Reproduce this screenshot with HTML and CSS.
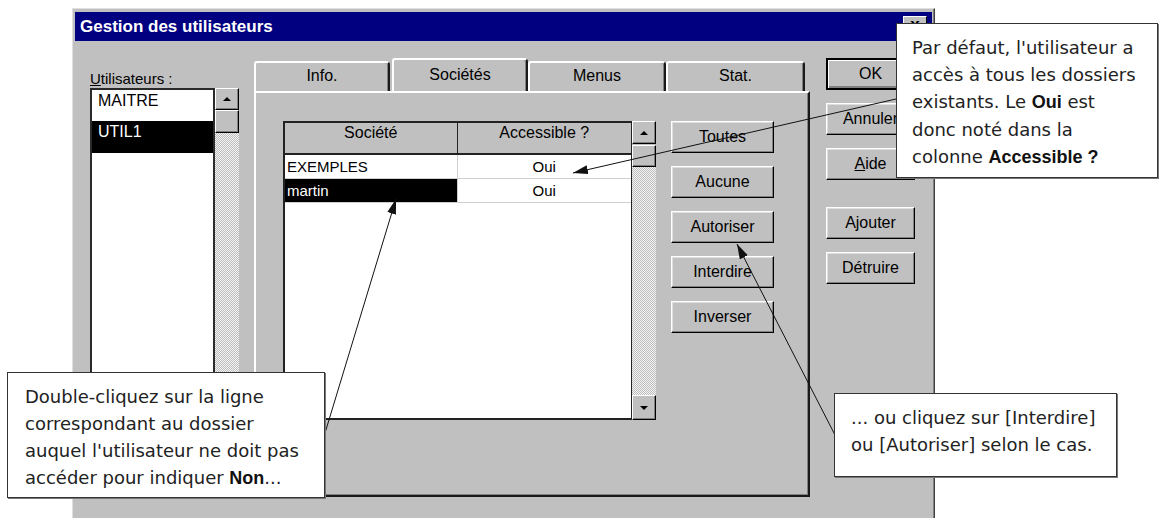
FILE: index.html
```html
<!DOCTYPE html>
<html lang="fr">
<head>
    <meta charset="UTF-8">
    <meta name="viewport" content="width=device-width, initial-scale=1.0">
    <title>Gestion des utilisateurs</title>
    <link rel="stylesheet" href="styles.css">
</head>
<body>
<div class="page">
    <div class="dialog">
        <div class="titlebar">
            <span>Gestion des utilisateurs</span>
            <span class="close">x</span>
        </div>
        <div class="content">
            <!-- users list -->
            <div class="users">
                <div class="label"><u>U</u>tilisateurs :</div>
                <div class="listbox">
                    <div class="items">
                        <div class="item">MAITRE</div>
                        <div class="item selected">UTIL1</div>
                    </div>
                    <div class="vscroll">
                        <div class="sbtn"><span class="arrow-up"></span></div>
                        <div class="thumb"></div>
                        <div class="track"></div>
                    </div>
                </div>
            </div>

            <!-- tabs -->
            <div class="tabs">
                <div class="tabrow">
                    <div class="tab tab-info">Info.</div>
                    <div class="tab tab-soc active">Sociétés</div>
                    <div class="tab tab-menus">Menus</div>
                    <div class="tab tab-stat">Stat.</div>
                </div>
                <div class="panel">
                    <div class="grid">
                        <div class="sheet">
                            <table class="rows">
                                <colgroup><col class="c1"><col class="c2"></colgroup>
                                <tr><th>Société</th><th>Accessible ?</th></tr>
                                <tr><td>EXEMPLES</td><td>Oui</td></tr>
                                <tr><td class="selected">martin</td><td>Oui</td></tr>
                            </table>
                        </div>
                        <div class="vscroll">
                            <div class="sbtn up"><span class="arrow-up"></span></div>
                            <div class="thumb small"></div>
                            <div class="track"></div>
                            <div class="sbtn down"><span class="arrow-down"></span></div>
                        </div>
                    </div>
                    <div class="actions">
                        <div class="btn">Toutes</div>
                        <div class="btn">Aucune</div>
                        <div class="btn">Autoriser</div>
                        <div class="btn">Interdire</div>
                        <div class="btn">Inverser</div>
                    </div>
                </div>
            </div>

            <!-- dialog buttons -->
            <div class="side">
                <div class="btn default">OK</div>
                <div class="btn">Annuler</div>
                <div class="btn"><span><u>A</u>ide</span></div>
                <div class="btn spaced">Ajouter</div>
                <div class="btn">Détruire</div>
            </div>
        </div>
    </div>

    <svg class="arrows" width="1160" height="518" viewBox="0 0 1160 518">
        <defs>
            <marker id="head" markerUnits="userSpaceOnUse" markerWidth="16" markerHeight="10"
                    refX="15" refY="4.5" orient="auto">
                <path d="M0,0 L15,4.5 L0,9 z" fill="#111"/>
            </marker>
        </defs>
        <line x1="896" y1="99" x2="573" y2="173" marker-end="url(#head)"/>
        <line x1="325" y1="433" x2="396" y2="199" marker-end="url(#head)"/>
        <line x1="835" y1="435" x2="737" y2="244" marker-end="url(#head)"/>
    </svg>

    <div class="note note-default">
        Par défaut, l'utilisateur a<br>
        accès à tous les dossiers<br>
        existants. Le <b>Oui</b> est<br>
        donc noté dans la<br>
        colonne <b>Accessible ?</b>
    </div>
    <div class="note note-dblclick">
        Double-cliquez sur la ligne<br>
        correspondant au dossier<br>
        auquel l'utilisateur ne doit pas<br>
        accéder pour indiquer <b>Non</b>...
    </div>
    <div class="note note-buttons">
        ... ou cliquez sur [Interdire]<br>
        ou [Autoriser] selon le cas.
    </div>
</div>
</body>
</html>
```

FILE: styles.css
```css
* {
    box-sizing: border-box;
}

body {
    margin: 0;
    background: #fff;
    font-family: "Liberation Sans", Arial, sans-serif;
    color: #000;
}

.page {
    position: relative;
    width: 1160px;
    height: 518px;
    overflow: hidden;
    padding: 8px 0 0 72px;
}

/* window */
.dialog {
    width: 863px;
    height: 530px;
    background: #c0c0c0;
    border-top: 1px solid #dfdfdf;
    border-left: 1px solid #dfdfdf;
    border-right: 1px solid #404040;
    box-shadow: inset -1px 0 #808080;
    padding: 3px 2px 0;
}

.titlebar {
    height: 29px;
    background: #000080;
    color: #fff;
    font-weight: bold;
    font-size: 17px;
    display: flex;
    align-items: center;
    justify-content: space-between;
    padding: 0 5px;
}

.close {
    width: 24px;
    height: 21px;
    background: #c0c0c0;
    color: #000;
    font-size: 17px;
    line-height: 15px;
    text-align: center;
    border-top: 1px solid #fff;
    border-left: 1px solid #fff;
    border-right: 1px solid #000;
    border-bottom: 1px solid #000;
}

.content {
    display: flex;
}

/* user list */
.users {
    width: 149px;
    margin-left: 15px;
    padding-top: 29px;
}

.label {
    font-size: 15px;
    line-height: 18px;
    height: 18px;
}

.listbox {
    display: flex;
    height: 397px;
}

.items {
    width: 125px;
    background: #fff;
    border-top: 2px solid #2a2a2a;
    border-left: 2px solid #2a2a2a;
    border-right: 2px solid #2a2a2a;
    font-size: 16px;
}

.item {
    height: 31px;
    line-height: 22px;
    padding-left: 6px;
}

.item.selected {
    height: 32px;
    background: #000;
    color: #fff;
}

/* scrollbars */
.vscroll {
    width: 24px;
    display: flex;
    flex-direction: column;
}

.sbtn, .thumb {
    background: #c0c0c0;
    border-top: 1px solid #fff;
    border-left: 1px solid #fff;
    border-right: 1px solid #000;
    border-bottom: 1px solid #000;
    box-shadow: inset -1px -1px #808080;
}

.sbtn {
    height: 22px;
    display: flex;
    align-items: center;
    justify-content: center;
}

.sbtn.up {
    height: 23px;
}

.sbtn.down {
    height: 25px;
}

.thumb {
    height: 23px;
}

.thumb.small {
    height: 22px;
    margin-top: 1px;
}

.track {
    flex: 1;
    background-color: #fff;
    background-image: repeating-conic-gradient(#bdbdbd 0 25%, #f4f4f4 0 50%);
    background-size: 2px 2px;
}

.arrow-up {
    border-left: 4px solid transparent;
    border-right: 4px solid transparent;
    border-bottom: 4px solid #000;
}

.arrow-down {
    border-left: 4px solid transparent;
    border-right: 4px solid transparent;
    border-top: 4px solid #000;
}

/* tabs */
.tabs {
    width: 556px;
    margin-left: 15px;
}

.tabrow {
    height: 50px;
    display: flex;
    align-items: flex-end;
}

.tab {
    height: 30px;
    border-top: 2px solid #fff;
    border-left: 2px solid #fff;
    border-right: 2px solid #1a1a1a;
    border-radius: 3px 4px 0 0;
    box-shadow: inset -1px 0 #808080;
    font-size: 16px;
    line-height: 26px;
    text-align: center;
}

.tab.active {
    height: 33px;
    line-height: 30px;
}

.tab-info {
    width: 136px;
    margin-right: 2px;
}

.tab-soc {
    width: 136px;
}

.tab-menus {
    width: 138px;
}

.tab-stat {
    width: 139px;
}

.panel {
    height: 406px;
    display: flex;
    align-items: flex-start;
    padding: 28px 0 0 27px;
    border-top: 2px solid #fff;
    border-left: 2px solid #fff;
    border-right: 2px solid #1a1a1a;
    border-bottom: 2px solid #1a1a1a;
    box-shadow: inset -1px -1px #808080;
}

/* companies grid */
.grid {
    display: flex;
    height: 299px;
}

.sheet {
    width: 349px;
    background: #fff;
    border: 2px solid #222;
    border-right-width: 1px;
}

.rows {
    width: 100%;
    border-collapse: collapse;
    table-layout: fixed;
}

.c1 {
    width: 172px;
}

.rows th {
    height: 31px;
    padding: 1px 0 0;
    vertical-align: top;
    line-height: 18px;
    background: #c0c0c0;
    border-bottom: 2px solid #222;
    font-weight: normal;
    font-size: 16px;
}

.rows th:first-child {
    border-right: 1px solid #222;
}

.rows td {
    height: 24px;
    padding: 0 2px;
    font-size: 15px;
    text-align: center;
    border-bottom: 1px solid #cfcfcf;
}

.rows td:first-child {
    text-align: left;
    border-right: 1px solid #cfcfcf;
}

.rows td.selected {
    background: #000;
    color: #fff;
}

/* push buttons */
.btn {
    height: 32px;
    background: #c0c0c0;
    border-top: 1px solid #fff;
    border-left: 1px solid #fff;
    border-right: 1px solid #000;
    border-bottom: 1px solid #000;
    box-shadow: inset -1px -1px #808080, inset 1px 1px #dfdfdf;
    font-size: 16px;
    display: flex;
    align-items: center;
    justify-content: center;
}

.btn.default {
    border: 2px solid #000;
    box-shadow: inset 1px 1px #fff, inset -2px -2px #808080;
}

.actions {
    width: 103px;
    margin-left: 15px;
    display: flex;
    flex-direction: column;
    gap: 13px;
}

.side {
    width: 89px;
    margin-left: 16px;
    padding-top: 17px;
    display: flex;
    flex-direction: column;
    gap: 13px;
}

.side .spaced {
    margin-top: 14px;
}

/* annotations */
.arrows {
    position: absolute;
    left: 0;
    top: 0;
    pointer-events: none;
}

.arrows line {
    stroke: #111;
    stroke-width: 1;
}

.note {
    position: absolute;
    background: #fff;
    border: 1px solid #333;
    box-shadow: 1px 1px 0 #777;
    font-family: "DejaVu Sans", sans-serif;
    font-size: 18px;
    line-height: 27px;
    color: #222;
    white-space: nowrap;
}

.note b {
    font-family: "Liberation Sans", Arial, sans-serif;
    font-size: 18px;
    color: #111;
}

.note-default {
    left: 896px;
    top: 23px;
    width: 262px;
    height: 155px;
    padding: 10px 0 0 15px;
}

.note-dblclick {
    left: 7px;
    top: 372px;
    width: 318px;
    height: 126px;
    padding: 10px 0 0 17px;
}

.note-buttons {
    left: 834px;
    top: 393px;
    width: 283px;
    height: 84px;
    padding: 10px 0 0 16px;
}
```
